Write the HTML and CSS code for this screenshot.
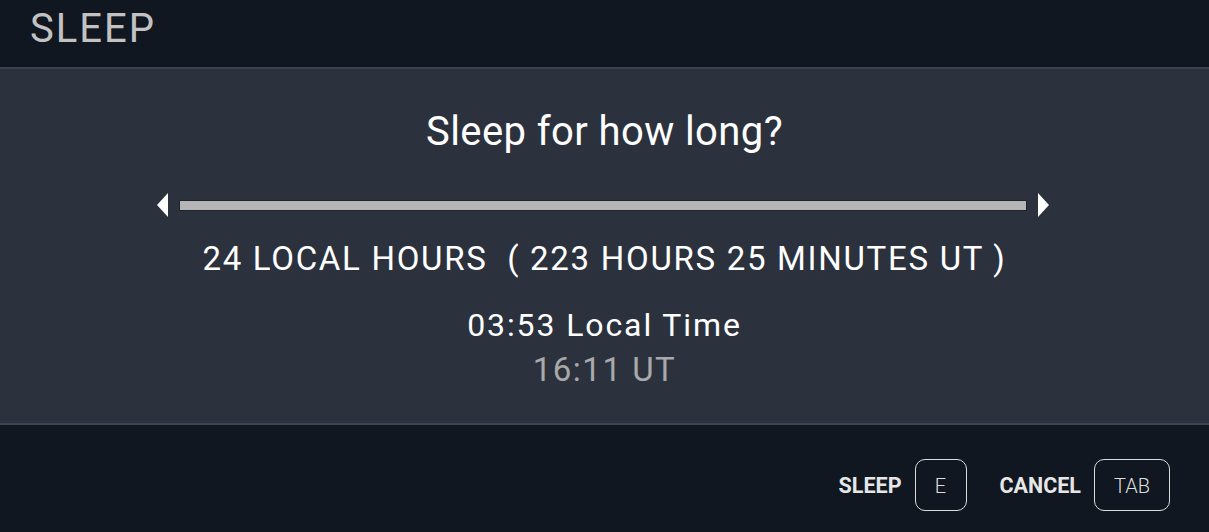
FILE: index.html
```html
<!DOCTYPE html>
<html>
<head>
<meta charset="utf-8">
<link rel="stylesheet" href="styles.css">
</head>
<body>
<div class="app">
  <header class="header">
    <div class="header-title">SLEEP</div>
  </header>
  <main class="main">
    <div class="question">Sleep for how long?</div>
    <div class="slider">
      <span class="arrow arrow-left"></span>
      <div class="bar"></div>
      <span class="arrow arrow-right"></span>
    </div>
    <div class="duration">24 LOCAL HOURS&nbsp;&nbsp;( 223 HOURS 25 MINUTES UT )</div>
    <div class="local-time">03:53 Local Time</div>
    <div class="ut-time">16:11 UT</div>
  </main>
  <footer class="footer">
    <div class="action">
      <span class="action-label">SLEEP</span>
      <span class="key key-e">E</span>
    </div>
    <div class="action">
      <span class="action-label">CANCEL</span>
      <span class="key key-tab">TAB</span>
    </div>
  </footer>
</div>
</body>
</html>
```
FILE: styles.css
```css
html, body {
  margin: 0;
  padding: 0;
  background: #111721;
}
body {
  width: 1209px;
  height: 532px;
  overflow: hidden;
  font-family: "Roboto", "Liberation Sans", sans-serif;
  color: #ffffff;
}
.app {
  display: flex;
  flex-direction: column;
  height: 532px;
}
.header {
  height: 69px;
  box-sizing: border-box;
  background: #111721;
  border-bottom: 2px solid #3a414d;
  padding: 5px 0 0 30px;
}
.header-title {
  font-size: 40px;
  line-height: 48px;
  color: #c2c2c2;
  letter-spacing: 2px;
}
.main {
  height: 356px;
  background: #2b323e;
  border-bottom: 2px solid #3e4551;
  box-sizing: border-box;
  display: flex;
  flex-direction: column;
  align-items: center;
}
.question {
  font-size: 40px;
  line-height: 48px;
  margin-top: 39px;
  letter-spacing: 0.4px;
}
.slider {
  display: flex;
  align-items: center;
  margin-top: 37px;
  gap: 11px;
  margin-right: 3px;
}
.arrow {
  width: 0;
  height: 0;
  border-top: 12px solid transparent;
  border-bottom: 12px solid transparent;
}
.arrow-left {
  border-right: 11px solid #ffffff;
}
.arrow-right {
  border-left: 11px solid #ffffff;
}
.bar {
  width: 846px;
  height: 9px;
  background: #b5b5b5;
  border: 1px solid #1e242d;
}
.duration {
  font-size: 33px;
  line-height: 40px;
  margin-top: 22px;
  letter-spacing: 1.7px;
}
.local-time {
  font-size: 32px;
  line-height: 40px;
  margin-top: 26px;
  letter-spacing: 1.9px;
}
.ut-time {
  font-size: 33px;
  line-height: 40px;
  color: #a9a9a9;
  margin-top: 5px;
  letter-spacing: 1.5px;
}
.footer {
  flex: 1;
  background: #111721;
  display: flex;
  justify-content: flex-end;
  align-items: center;
  padding: 13px 39px 0 0;
  gap: 33px;
}
.action {
  display: flex;
  align-items: center;
  gap: 13px;
}
.action-label {
  font-size: 21.5px;
  font-weight: bold;
  color: #e6e6e6;
}
.key {
  height: 52px;
  border: 1.5px solid #dcdcdc;
  border-radius: 10px;
  display: flex;
  align-items: center;
  justify-content: center;
  font-size: 20px;
  font-weight: 300;
  color: #dcdcdc;
  box-sizing: border-box;
  padding-top: 2px;
}
.key-e {
  width: 52px;
}
.key-tab {
  width: 76px;
}
```
